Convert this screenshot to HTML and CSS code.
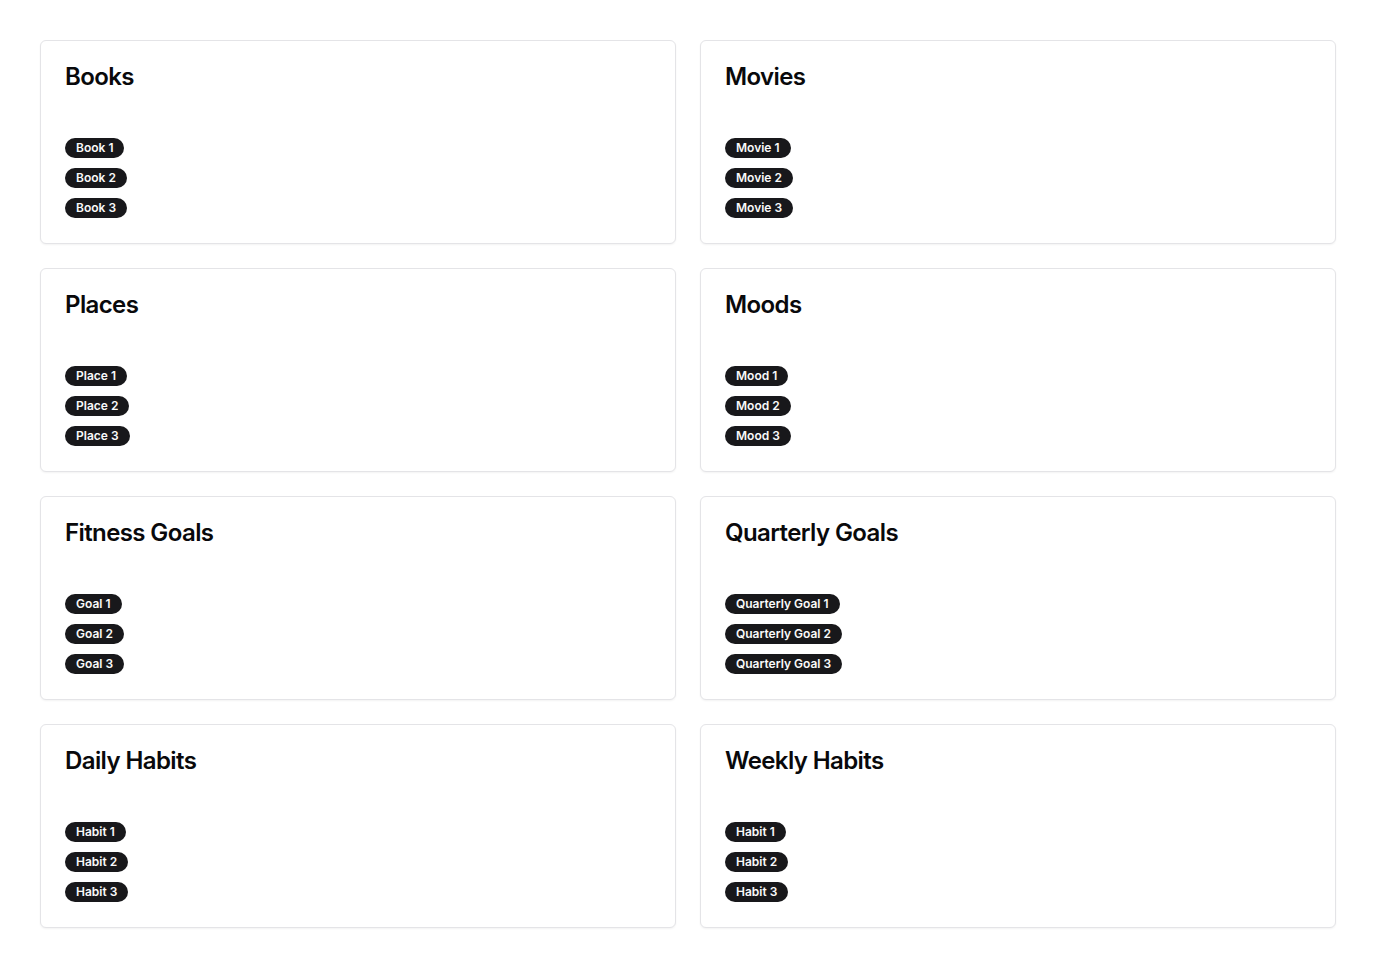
FILE: index.html
```html
<!DOCTYPE html>
<html>
<head>
<meta charset="utf-8">
<link rel="stylesheet" href="styles.css">
</head>
<body>
<main class="grid">
  <section class="card"><h2 class="title">Books</h2><div class="list"><span class="badge">Book 1</span><span class="badge">Book 2</span><span class="badge">Book 3</span></div></section>
  <section class="card"><h2 class="title">Movies</h2><div class="list"><span class="badge">Movie 1</span><span class="badge">Movie 2</span><span class="badge">Movie 3</span></div></section>
  <section class="card"><h2 class="title">Places</h2><div class="list"><span class="badge">Place 1</span><span class="badge">Place 2</span><span class="badge">Place 3</span></div></section>
  <section class="card"><h2 class="title">Moods</h2><div class="list"><span class="badge">Mood 1</span><span class="badge">Mood 2</span><span class="badge">Mood 3</span></div></section>
  <section class="card"><h2 class="title">Fitness Goals</h2><div class="list"><span class="badge">Goal 1</span><span class="badge">Goal 2</span><span class="badge">Goal 3</span></div></section>
  <section class="card"><h2 class="title">Quarterly Goals</h2><div class="list"><span class="badge">Quarterly Goal 1</span><span class="badge">Quarterly Goal 2</span><span class="badge">Quarterly Goal 3</span></div></section>
  <section class="card"><h2 class="title">Daily Habits</h2><div class="list"><span class="badge">Habit 1</span><span class="badge">Habit 2</span><span class="badge">Habit 3</span></div></section>
  <section class="card"><h2 class="title">Weekly Habits</h2><div class="list"><span class="badge">Habit 1</span><span class="badge">Habit 2</span><span class="badge">Habit 3</span></div></section>
</main>
</body>
</html>
```

FILE: styles.css
```css
* { box-sizing: border-box; }
html, body { margin: 0; padding: 0; background: #ffffff; }
body { font-family: Inter, "Noto Sans", sans-serif; color: #09090b; }
.grid {
  display: grid;
  grid-template-columns: 1fr 1fr;
  gap: 24px;
  padding: 40px;
}
.card {
  border: 1px solid #e4e4e7;
  border-radius: 6px;
  background: #fff;
  box-shadow: 0 1px 2px rgba(0,0,0,0.05);
  padding: 24px;
  height: 204px;
}
.title {
  margin: 0;
  font-size: 24px;
  line-height: 24px;
  font-weight: 600;
  letter-spacing: -0.6px;
}
.list {
  margin-top: 49px;
  display: flex;
  flex-direction: column;
  align-items: flex-start;
  gap: 10px;
}
.badge {
  display: inline-flex;
  align-items: center;
  height: 20px;
  padding: 0 11px;
  border-radius: 9999px;
  background: #18181b;
  color: #fafafa;
  font-size: 12px;
  font-weight: 600;
  line-height: 16px;
}
```
